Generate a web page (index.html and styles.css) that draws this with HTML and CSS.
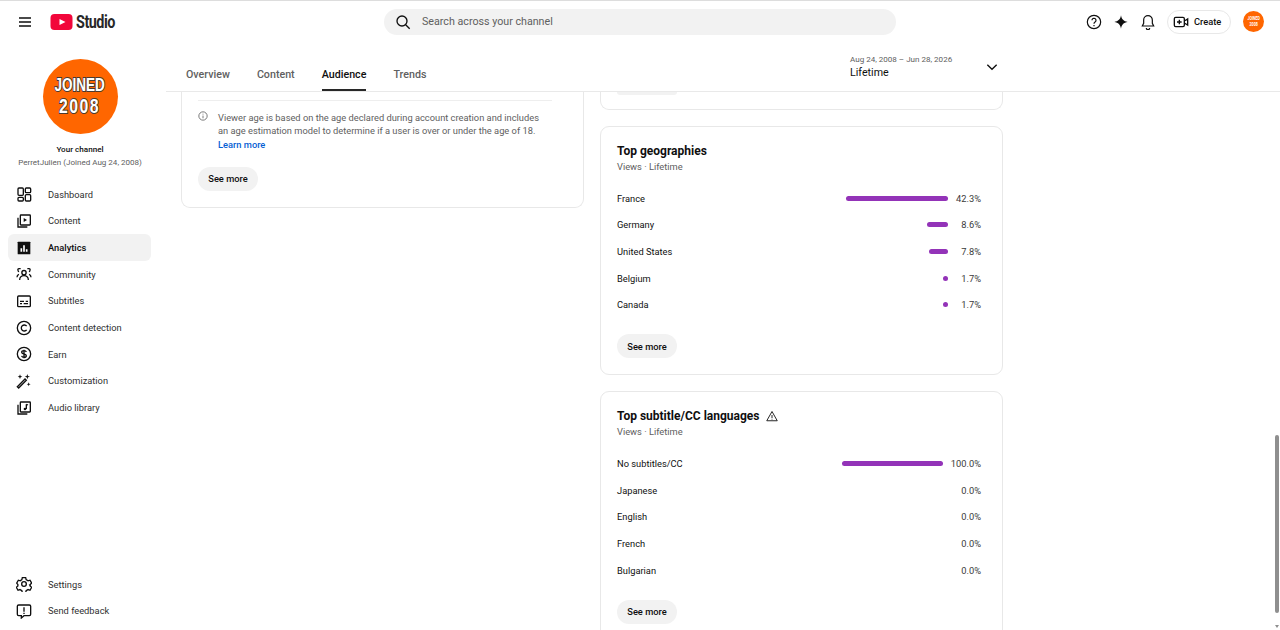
FILE: index.html
```html
<!DOCTYPE html>
<html lang="en">
<head>
    <meta charset="UTF-8">
    <meta name="viewport" content="width=device-width, initial-scale=1.0">
    <title>Channel analytics - YouTube Studio</title>
    <link rel="stylesheet" href="styles.css">
</head>
<body>

    <header class="topbar">
        <div class="topbar-left">
            <svg class="icon menu-icon" viewBox="0 0 24 24"><path d="M3 6h18M3 12h18M3 18h18"/></svg>
            <div class="logo">
                <svg class="logo-mark" viewBox="0 0 22 16"><rect width="22" height="16" rx="4" fill="#f2063a"/><path d="M9 5l6 3-6 3z" fill="#fff"/></svg>
                <span class="logo-text">Studio</span>
            </div>
        </div>
        <div class="search">
            <svg class="icon search-icon" viewBox="0 0 24 24"><circle cx="10.5" cy="10.5" r="7.5"/><path d="M16 16l6 6"/></svg>
            <span>Search across your channel</span>
        </div>
        <div class="topbar-right">
            <svg class="icon top-icon" viewBox="0 0 24 24"><circle cx="12" cy="12" r="10"/><path d="M9 9.5a3 3 0 1 1 4.6 2.5c-1 .7-1.6 1.2-1.6 2.5"/><path d="M12 16.6v1.6"/></svg>
            <svg class="icon top-icon" viewBox="0 0 24 24"><path class="solid" d="M12 2c1 6 4 9 10 10-6 1-9 4-10 10-1-6-4-9-10-10 6-1 9-4 10-10z"/></svg>
            <svg class="icon top-icon" viewBox="0 0 24 24"><path d="M12 2.5a6.500 6.500 0 0 0-6.500 6.500v5L3.500 18h17l-2-4V9A6.500 6.500 0 0 0 12 2.500z"/><path d="M9.500 21a2.500 2.500 0 0 0 5 0"/></svg>
            <button class="create-btn">
                <svg class="icon create-icon" viewBox="0 0 24 24"><rect x="2" y="5" width="15" height="14" rx="2"/><path d="M17 10.500l5-3v9l-5-3M9.500 8.500v7M6 12h7"/></svg>
                Create
            </button>
            <div class="avatar-small"><span>JOINED<br>2008</span></div>
        </div>
    </header>

    <div class="layout">
        <aside class="sidebar">
            <div class="channel">
                <div class="avatar-big"><span class="avatar-text"><span class="avatar-line1">JOINED</span><span class="avatar-line2">2008</span></span></div>
                <div class="channel-title">Your channel</div>
                <div class="channel-name">PerretJulien (Joined Aug 24, 2008)</div>
            </div>
            <nav class="nav">
                <a class="nav-item">
                    <svg class="icon" viewBox="0 0 24 24"><rect x="3" y="3" width="8" height="11" rx="1.500"/><rect x="14" y="3" width="8" height="7" rx="1.500"/><rect x="3" y="17" width="8" height="5.500" rx="1.500"/><rect x="14" y="13" width="8" height="9.500" rx="1.500"/></svg>
                    Dashboard
                </a>
                <a class="nav-item">
                    <svg class="icon" viewBox="0 0 24 24"><rect x="6.500" y="3" width="15" height="15" rx="1"/><path d="M3 7v14h14"/><path class="solid" d="M11.500 7.500l5 3-5 3z"/></svg>
                    Content
                </a>
                <a class="nav-item active">
                    <svg class="icon" viewBox="0 0 24 24"><rect class="solid" x="2.500" y="2.500" width="19" height="19" rx="1"/><path class="cut" d="M8 12.500v5M12 8v9.500M16 14v3.500"/></svg>
                    Analytics
                </a>
                <a class="nav-item">
                    <svg class="icon" viewBox="0 0 24 24"><circle cx="12" cy="10" r="3.200"/><path d="M5.500 21c0-4 3-6.500 6.500-6.500s6.500 2.500 6.500 6.500"/><path d="M7 4H4.500C3 4 2.500 5 3 6.500L4 9M17 4h2.500C21 4 21.500 5 21 6.500L20 9M1.500 17c0-2.500 1-4 3-4.500M22.500 17c0-2.500-1-4-3-4.500"/></svg>
                    Community
                </a>
                <a class="nav-item">
                    <svg class="icon" viewBox="0 0 24 24"><rect x="2.500" y="4.500" width="19" height="16" rx="1.500"/><path d="M6 12.500h6M14.500 12.500h3.500M6 16h3M11.500 16h6.500"/></svg>
                    Subtitles
                </a>
                <a class="nav-item">
                    <svg class="icon" viewBox="0 0 24 24"><circle cx="12" cy="12" r="10"/><path d="M16 9.200a4.500 4.500 0 1 0 0 5.600"/></svg>
                    Content detection
                </a>
                <a class="nav-item">
                    <svg class="icon" viewBox="0 0 24 24"><circle cx="12" cy="12" r="10"/><path d="M15.500 9c-.5-1.300-1.800-2-3.500-2-2 0-3.500 1-3.500 2.500 0 3.500 7 1.500 7 5 0 1.500-1.500 2.500-3.500 2.500-1.800 0-3.100-.8-3.600-2.200M12 5.500v13"/></svg>
                    Earn
                </a>
                <a class="nav-item">
                    <svg class="icon" viewBox="0 0 24 24"><path d="M4 22.500l-2-2L13.500 9l2 2z"/><path class="solid" d="M6 2l1 2.500L9.500 5.500 7 6.500 6 9 5 6.500 2.500 5.500 5 4.500zM17 1.500l1 3 3 1-3 1-1 3-1-3-3-1 3-1zM19 14l.8 2.200 2.200.8-2.200.8L19 20l-.8-2.200-2.200-.8 2.200-.8z"/></svg>
                    Customization
                </a>
                <a class="nav-item">
                    <svg class="icon" viewBox="0 0 24 24"><rect x="6.500" y="3" width="15" height="15" rx="1"/><path d="M3 7v14h14"/><path d="M15.500 6.500v7"/><circle class="solid" cx="13.500" cy="13.500" r="2"/><path d="M15.500 6.500l2.500 1"/></svg>
                    Audio library
                </a>
            </nav>
            <nav class="nav nav-bottom">
                <a class="nav-item">
                    <svg class="icon" viewBox="0 0 24 24"><path d="M9.500 2.500h5l.7 3 2.900 1.700 2.900-.9 2.500 4.300-2.200 2.100v2.600l-.1-.3 2.300 2-2.500 4.400-2.900-1-2.900 1.700-.7 3h-5l-.7-3-2.900-1.700-2.900 1-2.500-4.400 2.300-2v-2.300L1 10.600l2.500-4.300 2.900.9 2.400-1.700z"/><circle cx="12" cy="12" r="3.500"/></svg>
                    Settings
                </a>
                <a class="nav-item">
                    <svg class="icon" viewBox="0 0 24 24"><path d="M4 3h16a2 2 0 0 1 2 2v12a2 2 0 0 1-2 2h-8l-4 3.500V19H4a2 2 0 0 1-2-2V5a2 2 0 0 1 2-2z"/><path d="M12 6.500v6.500M12 14.500v2"/></svg>
                    Send feedback
                </a>
            </nav>
        </aside>

        <main class="main">
            <div class="tabbar">
                <div class="tabs">
                    <a class="tab">Overview</a>
                    <a class="tab">Content</a>
                    <a class="tab active">Audience</a>
                    <a class="tab">Trends</a>
                </div>
                <div class="date-range">
                    <div>
                        <div class="date-dates">Aug 24, 2008 – Jun 28, 2026</div>
                        <div class="date-label">Lifetime</div>
                    </div>
                    <svg class="icon chevron" viewBox="0 0 24 24"><path d="M5 8.500l7 7 7-7"/></svg>
                </div>
            </div>

            <div class="columns">
                <div class="column">
                    <section class="card card-cut">
                        <div class="note">
                            <svg class="icon note-icon" viewBox="0 0 24 24"><circle cx="12" cy="12" r="10"/><path d="M12 11v6.500M12 6.500v2"/></svg>
                            <p>Viewer age is based on the age declared during account creation and includes an age estimation model to determine if a user is over or under the age of 18. <a class="link">Learn more</a></p>
                        </div>
                        <button class="more-btn">See more</button>
                    </section>
                </div>

                <div class="column">
                    <section class="card card-stub"><div class="stub-btn"></div></section>

                    <section class="card">
                        <h2 class="card-title">Top geographies</h2>
                        <div class="card-sub">Views · Lifetime</div>
                        <div class="rows">
                            <div class="row"><span class="row-label">France</span><span class="bar" style="width: 102px"></span><span class="row-value">42.3%</span></div>
                            <div class="row"><span class="row-label">Germany</span><span class="bar" style="width: 21px"></span><span class="row-value">8.6%</span></div>
                            <div class="row"><span class="row-label">United States</span><span class="bar" style="width: 19px"></span><span class="row-value">7.8%</span></div>
                            <div class="row"><span class="row-label">Belgium</span><span class="bar" style="width: 5px"></span><span class="row-value">1.7%</span></div>
                            <div class="row"><span class="row-label">Canada</span><span class="bar" style="width: 5px"></span><span class="row-value">1.7%</span></div>
                        </div>
                        <button class="more-btn">See more</button>
                    </section>

                    <section class="card">
                        <h2 class="card-title">
                            Top subtitle/CC languages
                            <svg class="icon warn-icon" viewBox="0 0 24 24"><path d="M12 3L1.500 21.500h21z"/><path d="M12 10v6M12 17.500v1.500"/></svg>
                        </h2>
                        <div class="card-sub">Views · Lifetime</div>
                        <div class="rows">
                            <div class="row"><span class="row-label">No subtitles/CC</span><span class="bar" style="width: 101px"></span><span class="row-value">100.0%</span></div>
                            <div class="row"><span class="row-label">Japanese</span><span class="row-value">0.0%</span></div>
                            <div class="row"><span class="row-label">English</span><span class="row-value">0.0%</span></div>
                            <div class="row"><span class="row-label">French</span><span class="row-value">0.0%</span></div>
                            <div class="row"><span class="row-label">Bulgarian</span><span class="row-value">0.0%</span></div>
                        </div>
                        <button class="more-btn">See more</button>
                    </section>
                </div>
            </div>
        </main>
    </div>

    <div class="scroll-thumb"></div>
    <div class="scroll-arrow"></div>

</body>
</html>
```

FILE: styles.css
```css
* {
    box-sizing: border-box;
}

html, body {
    height: 100%;
}

body {
    margin: 0;
    overflow: hidden;
    display: flex;
    flex-direction: column;
    font-family: 'Roboto', 'Liberation Sans', sans-serif;
    font-size: 10px;
    color: #0f0f0f;
    background-color: #fff;
}

.icon {
    width: 16px;
    height: 16px;
    flex: none;
    fill: none;
    stroke: #0f0f0f;
    stroke-width: 2;
}

.icon .solid {
    fill: #0f0f0f;
    stroke: none;
}

.icon .cut {
    stroke: #fff;
    stroke-width: 2.500;
}

/* top bar */
.topbar {
    height: 45px;
    flex: none;
    display: flex;
    align-items: center;
    padding-bottom: 3px;
    border-top: 1px solid #ddd;
}

.topbar-left {
    display: flex;
    align-items: center;
    padding-left: 17px;
    width: 384px;
}

.logo {
    display: flex;
    align-items: center;
    margin-left: 17px;
}

.logo-mark {
    width: 23px;
    height: 16px;
}

.logo-text {
    margin-left: 3px;
    font-family: 'Roboto', 'Liberation Sans', sans-serif;
    font-size: 18px;
    font-weight: 700;
    letter-spacing: -0.6px;
    color: #282828;
    display: inline-block;
    transform: scaleX(0.8);
    transform-origin: left center;
}

.search {
    width: 512px;
    height: 26px;
    display: flex;
    align-items: center;
    border-radius: 13px;
    background-color: #f2f2f2;
    padding-left: 11px;
    font-size: 10.700px;
    color: #606060;
}

.search-icon {
    margin-right: 11px;
}

.topbar-right {
    margin-left: auto;
    padding-right: 16px;
    display: flex;
    align-items: center;
    gap: 11px;
}

.top-icon {
    stroke-width: 1.800;
}

.create-btn {
    width: 64px;
    height: 24px;
    display: flex;
    align-items: center;
    gap: 5px;
    padding: 0 0 0 5px;
    border: 1px solid #e8e8e8;
    border-radius: 12px;
    background-color: #fff;
    font-family: inherit;
    font-size: 9.300px;
    font-weight: 500;
    color: #0f0f0f;
}

.avatar-small,
.avatar-big {
    border-radius: 50%;
    background-color: #ff6600;
    display: flex;
    align-items: center;
    justify-content: center;
    text-align: center;
    color: #fff;
    font-weight: 700;
}

.avatar-small {
    width: 21px;
    height: 21px;
    margin-left: 1px;
    font-size: 5px;
    line-height: 5.500px;
}

.avatar-small span {
    transform: scaleX(0.72);
}

.avatar-big {
    width: 75px;
    height: 75px;
    font-family: 'Liberation Sans', sans-serif;
}

.avatar-text {
    display: block;
    transform: scaleX(0.75);
    paint-order: stroke fill;
    -webkit-text-stroke: 2px #4a3a30;
}

.avatar-line1 {
    display: block;
    font-size: 18px;
    line-height: 19px;
}

.avatar-line2 {
    display: block;
    font-size: 21px;
    line-height: 22px;
    letter-spacing: 2px;
}

/* sidebar */
.layout {
    flex: 1;
    min-height: 0;
    display: flex;
}

.sidebar {
    width: 166px;
    flex: none;
    display: flex;
    flex-direction: column;
    padding: 0 15px 6px 8px;
}

.channel {
    display: flex;
    flex-direction: column;
    align-items: center;
    padding-top: 14px;
    height: 136px;
    width: 144px;
}

.channel-title {
    margin-top: 9px;
    font-size: 8.100px;
    line-height: 12px;
    font-weight: 500;
}

.channel-name {
    margin-top: 2px;
    font-size: 8.050px;
    line-height: 12px;
    color: #606060;
}

.nav-bottom {
    margin-top: auto;
}

.nav-item {
    height: 26.670px;
    display: flex;
    align-items: center;
    gap: 16px;
    padding-left: 8px;
    border-radius: 6px;
    font-size: 9.300px;
    color: #303030;
}

.nav-item.active {
    background-color: #f2f2f2;
    font-weight: 500;
    color: #0f0f0f;
}

/* main area */
.main {
    flex: 1;
    min-width: 0;
    display: flex;
    flex-direction: column;
}

.tabbar {
    height: 47px;
    flex: none;
    display: flex;
    justify-content: space-between;
    padding: 0 277px 0 20px;
    border-bottom: 1px solid #e9e9e9;
}

.tabs {
    display: flex;
    gap: 27px;
    align-items: flex-end;
}

.tab {
    height: 32px;
    padding-top: 9px;
    font-size: 10.700px;
    font-weight: 500;
    color: #606060;
}

.tab.active {
    color: #0f0f0f;
    border-bottom: 2px solid #282828;
}

.date-range {
    width: 153px;
    display: flex;
    justify-content: space-between;
    align-items: center;
    padding-right: 3px;
    padding-bottom: 2px;
}

.date-dates {
    font-size: 8.050px;
    line-height: 11px;
    color: #606060;
}

.date-label {
    margin-top: 1px;
    font-size: 10.700px;
    line-height: 14px;
}

.chevron {
    width: 16px;
    height: 16px;
}

.columns {
    flex: 1;
    min-height: 0;
    overflow: hidden;
    display: flex;
    gap: 16px;
    padding-left: 15px;
}

.column {
    width: 403px;
    display: flex;
    flex-direction: column;
    gap: 16px;
}

.card {
    flex: none;
    padding: 15.500px 16px 16px;
    background-color: #fff;
    border: 1px solid #e8e8e8;
    border-radius: 9px;
}

.card-cut {
    border-top: none;
    border-top-left-radius: 0;
    border-top-right-radius: 0;
    padding: 8px 16px 16px;
}

.card-stub {
    height: 18px;
    padding: 0 16px;
    border-top: none;
    border-top-left-radius: 0;
    border-top-right-radius: 0;
}

.stub-btn {
    width: 60px;
    height: 3px;
    background-color: #f2f2f2;
    border-radius: 0 0 10px 10px;
}

.note {
    display: flex;
    gap: 10px;
    width: 354px;
    padding-top: 10px;
    border-top: 1px solid #eee;
    color: #606060;
}

.note p {
    margin: 0;
    max-width: 330px;
    font-size: 9.300px;
    line-height: 13.330px;
}

.note-icon {
    width: 10px;
    height: 10px;
    margin-top: 0;
    stroke: #606060;
    stroke-width: 2;
}

.link {
    display: block;
    color: #065fd4;
    font-weight: 500;
}

.more-btn {
    display: block;
    width: 60px;
    height: 24px;
    padding: 0;
    border: none;
    border-radius: 12px;
    background-color: #f2f2f2;
    font-family: inherit;
    font-size: 9.300px;
    font-weight: 500;
    color: #0f0f0f;
}

.card .note + .more-btn {
    margin-top: 16px;
}

.card-title {
    margin: 0;
    display: flex;
    align-items: center;
    gap: 8px;
    font-size: 12px;
    line-height: 16px;
    font-weight: 700;
}

.warn-icon {
    width: 12px;
    height: 12px;
    margin-left: -1px;
    stroke-width: 1.800;
}

.card-sub {
    margin-top: 2px;
    font-size: 9.300px;
    line-height: 12px;
    color: #606060;
}

.rows {
    margin-top: 12.500px;
    margin-bottom: 16px;
}

.row {
    height: 26.670px;
    display: flex;
    align-items: center;
    font-size: 9.300px;
}

.row-label {
    flex: 1;
}

.bar {
    height: 5px;
    border-radius: 3px;
    background-color: #9333b8;
}

.row-value {
    min-width: 30px;
    margin-left: 8px;
    padding-right: 5px;
    text-align: right;
    color: #3a3a3a;
}

.scroll-thumb {
    position: absolute;
    left: 1275px;
    top: 435px;
    width: 4px;
    height: 178px;
    border-radius: 2px;
    background-color: #8f8f8f;
}

.scroll-arrow {
    position: absolute;
    left: 1275px;
    top: 625px;
    width: 0;
    height: 0;
    border-left: 2px solid transparent;
    border-right: 2px solid transparent;
    border-top: 3px solid #8f8f8f;
}
```
